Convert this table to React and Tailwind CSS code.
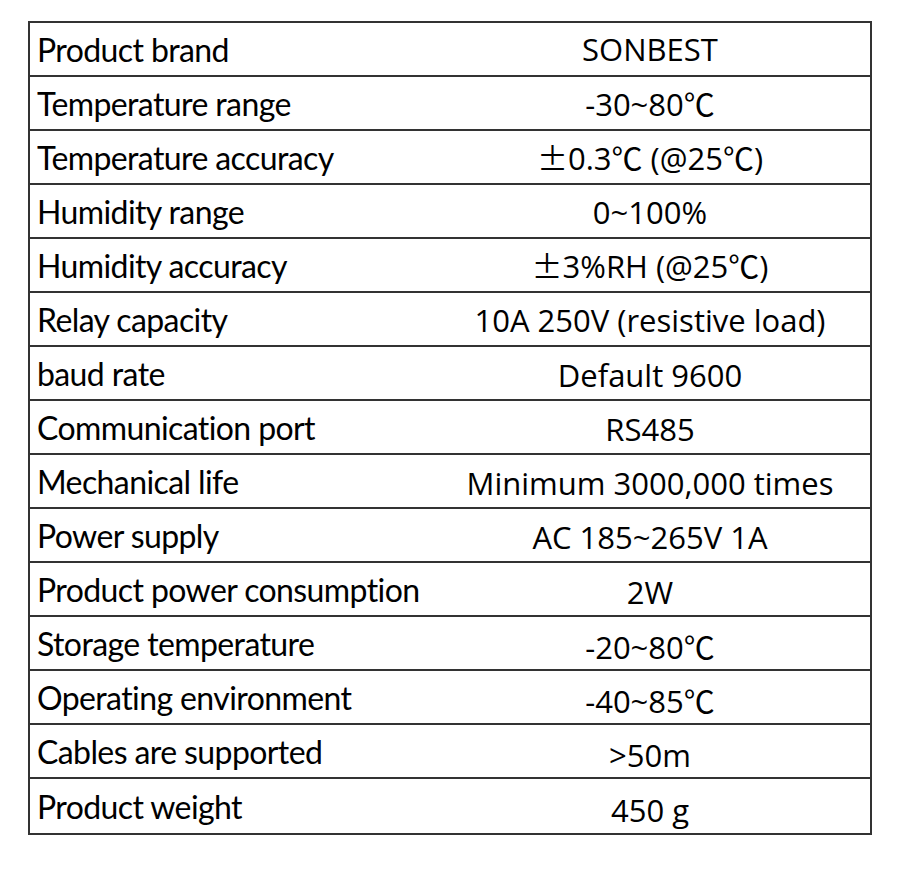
import React from "react";

const specs = [
  ["Product brand", "SONBEST"],
  ["Temperature range", "-30~80℃"],
  ["Temperature accuracy", "±0.3℃ (@25℃)"],
  ["Humidity range", "0~100%"],
  ["Humidity accuracy", "±3%RH (@25℃)"],
  ["Relay capacity", "10A 250V (resistive load)"],
  ["baud rate", "Default 9600"],
  ["Communication port", "RS485"],
  ["Mechanical life", "Minimum 3000,000 times"],
  ["Power supply", "AC 185~265V 1A"],
  ["Product power consumption", "2W"],
  ["Storage temperature", "-20~80℃"],
  ["Operating environment", "-40~85℃"],
  ["Cables are supported", ">50m"],
  ["Product weight", "450 g"],
];

// ± and ℃ are set in a CJK face in the original (wide glyphs)
function Value({ text }) {
  return (
    <span className="whitespace-pre">
      {text.split(/([±℃])/).map((part, k) =>
        part === "±" || part === "℃" ? (
          <span key={k} className="font-['Noto_Sans_CJK_SC',sans-serif]">
            {part}
          </span>
        ) : (
          part
        )
      )}
    </span>
  );
}

export default function App() {
  return (
    <div className="w-[900px] h-[871px] bg-white pt-[21px] pl-[28px]">
      <div className="w-[844px] border-2 border-[#333] flex flex-col">
        {specs.map(([label, value], i) => (
          <div
            key={label}
            className={
              "flex h-[54px] " +
              (i < specs.length - 1 ? "border-b-2 border-[#333]" : "")
            }
          >
            <div className="w-[400px] pl-[7px] pt-[2px] flex items-center text-black text-[32px] tracking-[-0.6px] font-['Lato','Open_Sans',sans-serif]">
              {label}
            </div>
            <div
              className="flex-1 flex items-center justify-center text-black text-[31px] font-['Open_Sans','Noto_Sans',sans-serif]"
              style={{ paddingTop: `${Math.round(i * 0.6)}px` }}
            >
              <Value text={value} />
            </div>
          </div>
        ))}
      </div>
    </div>
  );
}
